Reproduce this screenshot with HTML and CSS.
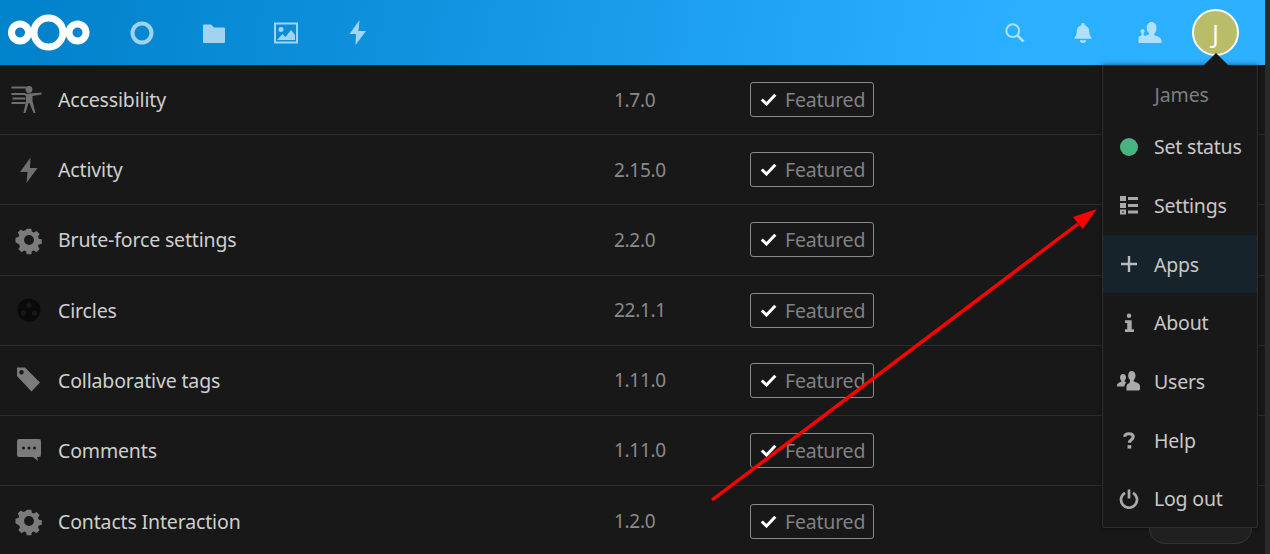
FILE: index.html
```html
<!DOCTYPE html>
<html lang="en">
<head>
<meta charset="utf-8">
<title>Apps</title>
<link rel="stylesheet" href="styles.css">
</head>
<body>
<div class="page">
  <header class="topbar">
    <nav class="nav-left">
      <svg class="logo" width="82" height="38" viewBox="0 0 82 38"><g fill="none" stroke="#fff" stroke-width="7"><circle cx="40.500" cy="18.500" r="14.500"/><circle cx="12" cy="18.500" r="8.500"/><circle cx="69.500" cy="18.500" r="8.500"/></g></svg>
      <div class="nav-apps">
        <svg class="nav-icon" width="24" height="24" viewBox="0 0 24 24"><circle cx="12" cy="12" r="9.500" fill="none" stroke="#fff" stroke-width="4"/></svg>
        <svg class="nav-icon" width="24" height="24" viewBox="0 0 24 24"><path d="M1 4.500a1 1 0 0 1 1-1h7l3 3h10a1 1 0 0 1 1 1V21a1 1 0 0 1-1 1H2a1 1 0 0 1-1-1z" fill="#fff"/></svg>
        <svg class="nav-icon" width="24" height="24" viewBox="0 0 24 24"><path fill-rule="evenodd" d="M0 1.500h24v21H0zM2 3.500v17h20v-17zM7 6a2.500 2.500 0 1 1 0 5 2.500 2.500 0 0 1 0-5zM3 19l5.500-6 3 3 5.500-7 4 5v5z" fill="#fff"/></svg>
        <svg class="nav-icon" width="24" height="26" viewBox="0 0 24 26"><path d="M13.500 0 3.500 14h6.500L9.500 25 20 11h-7.500z" fill="#fff"/></svg>
      </div>
    </nav>
    <div class="nav-right">
      <svg class="nav-tool" width="20" height="20" viewBox="0 0 22 22"><circle cx="8.500" cy="8.500" r="7" fill="none" stroke="#fff" stroke-width="2.200"/><path d="M13.500 13.500 20.500 20.500" stroke="#fff" stroke-width="2.800"/></svg>
      <svg class="nav-tool" width="18" height="20" viewBox="0 0 20 22"><path d="M10 0a2 2 0 0 1 2 2.300c3.500 1 5 4 5 7.200 0 3 1 5 2.500 6.500v1.500H.5V16C2 14.500 3 12.500 3 9.500c0-3.200 1.500-6.200 5-7.200A2 2 0 0 1 10 0zM6.500 19h7a3.500 3 0 0 1-7 0z" fill="#fff"/></svg>
      <svg class="nav-tool" width="24" height="24" viewBox="0 0 24 24"><path d="M13.500 1c3 0 5 2.500 5 6 0 2.500-1 4.500-2.200 5.700v1.500c3 1.200 7 2 7.200 5.300v2.500H6.500v-4.500c0-1 .5-2 1.500-3 1-.4 2-.8 3-1.300v-1C9.500 11 8.700 9 8.700 7c0-3.500 2-6 4.800-6z" fill="#fff"/><path d="M4.500 8a2.200 2.200 0 0 1 1.200 4v2.500h1.800v7.500H1.500c-.8 0-1-.5-1-1v-4c0-1.500 1.500-2.500 3-2.500V12a2.200 2.200 0 0 1 1-4z" fill="#fff"/></svg>
      <div class="avatar">J</div>
    </div>
  </header>
  <main class="rows">
    <div class="row">
      <svg class="row-icon" width="30" height="30" viewBox="0 0 30 30"><g fill="#6f6f6f" transform="translate(-2.500 0)"><circle cx="17.500" cy="4.500" r="3.400"/><path d="M0 8h14l0 2H0zM12 9l18-1.500v2L21 11v5l3 12h-2l-4-10h-1l-3 10h-2l2.500-12v-5z"/><path d="M0 1.500h15v2H0zM1 12.500h13v2H1zM0 17h14v2H0z"/></g></svg>
      <span class="name">Accessibility</span><span class="version">1.7.0</span><span class="badge"><svg class="check" width="17" height="13" viewBox="0 0 16 13"><path d="M1.300 6.500 6 11 14.800 1.800" fill="none" stroke="#fff" stroke-width="3"/></svg>Featured</span>
    </div>
    <div class="row">
      <svg class="row-icon" width="30" height="30" viewBox="0 0 30 30"><path d="M16.500 2.500 6 17h7.500L12.500 28 23.500 13h-7.500z" fill="#6f6f6f"/></svg>
      <span class="name">Activity</span><span class="version">2.15.0</span><span class="badge"><svg class="check" width="17" height="13" viewBox="0 0 16 13"><path d="M1.300 6.500 6 11 14.800 1.800" fill="none" stroke="#fff" stroke-width="3"/></svg>Featured</span>
    </div>
    <div class="row">
      <svg class="row-icon" width="30" height="30" viewBox="0 0 30 30"><use href="#gear"/></svg>
      <span class="name">Brute-force settings</span><span class="version">2.2.0</span><span class="badge"><svg class="check" width="17" height="13" viewBox="0 0 16 13"><path d="M1.300 6.500 6 11 14.800 1.800" fill="none" stroke="#fff" stroke-width="3"/></svg>Featured</span>
    </div>
    <div class="row">
      <svg class="row-icon" width="30" height="30" viewBox="0 0 30 30"><path fill-rule="evenodd" d="M15 3.500a11.500 11.500 0 1 1 0 23 11.500 11.500 0 0 1 0-23zM15 7.500a2.600 2.600 0 1 0 0 5.200 2.600 2.600 0 0 0 0-5.200zM9.500 15.500a2.600 2.600 0 1 0 0 5.200 2.600 2.600 0 0 0 0-5.200zM20.500 15.500a2.600 2.600 0 1 0 0 5.200 2.600 2.600 0 0 0 0-5.200z" fill="#0a0a0a"/></svg>
      <span class="name">Circles</span><span class="version">22.1.1</span><span class="badge"><svg class="check" width="17" height="13" viewBox="0 0 16 13"><path d="M1.300 6.500 6 11 14.800 1.800" fill="none" stroke="#fff" stroke-width="3"/></svg>Featured</span>
    </div>
    <div class="row">
      <svg class="row-icon" width="30" height="30" viewBox="0 0 30 30"><path fill-rule="evenodd" d="M3 2.500h8l15 15-8.500 9L3 11zM7.500 5a2.200 2.200 0 1 0 0 4.400 2.200 2.200 0 0 0 0-4.400z" fill="#7b7b7b"/></svg>
      <span class="name">Collaborative tags</span><span class="version">1.11.0</span><span class="badge"><svg class="check" width="17" height="13" viewBox="0 0 16 13"><path d="M1.300 6.500 6 11 14.800 1.800" fill="none" stroke="#fff" stroke-width="3"/></svg>Featured</span>
    </div>
    <div class="row">
      <svg class="row-icon" width="30" height="30" viewBox="0 0 30 30"><path fill-rule="evenodd" d="M5 4h20a2 2 0 0 1 2 2v14a2 2 0 0 1-2 2h-2l1 4-5-4H5a2 2 0 0 1-2-2V6a2 2 0 0 1 2-2zM9.500 11.500a1.500 1.500 0 1 0 0 3 1.500 1.500 0 0 0 0-3zM15 11.500a1.500 1.500 0 1 0 0 3 1.500 1.500 0 0 0 0-3zM20.500 11.500a1.500 1.500 0 1 0 0 3 1.500 1.500 0 0 0 0-3z" fill="#7b7b7b"/></svg>
      <span class="name">Comments</span><span class="version">1.11.0</span><span class="badge"><svg class="check" width="17" height="13" viewBox="0 0 16 13"><path d="M1.300 6.500 6 11 14.800 1.800" fill="none" stroke="#fff" stroke-width="3"/></svg>Featured</span>
    </div>
    <div class="row">
      <svg class="row-icon" width="30" height="30" viewBox="0 0 30 30"><use href="#gear"/></svg>
      <span class="name">Contacts Interaction</span><span class="version">1.2.0</span><span class="badge"><svg class="check" width="17" height="13" viewBox="0 0 16 13"><path d="M1.300 6.500 6 11 14.800 1.800" fill="none" stroke="#fff" stroke-width="3"/></svg>Featured</span>
    </div>
  </main>
  <div class="scrollbar"></div>
  <aside class="menu">
    <div class="caret"></div>
    <div class="menu-name">James</div>
    <div class="item"><span class="item-icon"><span class="status-dot"></span></span>Set status</div>
    <div class="item"><span class="item-icon"><svg width="20" height="20" viewBox="0 0 20 20"><g fill="#aaa"><path d="M1 1h6v5H1zM9 2h10v3H9zM1 8h6v5H1zM9 9h10v3H9zM9 15.500h10v3H9z"/><path fill-rule="evenodd" d="M1 14.500h6v5H1zM3 16.500v1h2v-1z"/></g></svg></span>Settings</div>
    <div class="item active"><span class="item-icon"><svg width="20" height="20" viewBox="0 0 20 20"><path d="M10 2v16M2 10h16" stroke="#bbb" stroke-width="2.400"/></svg></span>Apps</div>
    <div class="item"><span class="item-icon"><svg width="18" height="20" viewBox="0 0 20 22"><g fill="#aaa"><circle cx="10" cy="3" r="2.500"/><path d="M5.500 8h7.500v10h2.500v3h-10v-3H8v-7H5.500z"/></g></svg></span>About</div>
    <div class="item"><span class="item-icon"><svg width="24" height="20" viewBox="0 0 24 20"><g fill="#aaa"><path d="M14.500 0c2.500 0 4 2 4 4.500 0 2-.8 3.500-1.800 4.500v1.500c2.500 1 6 1.500 6.300 4.500v2.700c0 1-.5 1.800-2 1.800H9.500V15.500c0-1.500 1-2.500 2.700-3.200l.8-1.800V9c-1-1-1.800-2.500-1.800-4.500C11.200 2 12.500 0 14.500 0z"/><path d="M6 3c1.800 0 3 1.500 3 3.300 0 1.500-.7 2.700-1.300 3.300v1.200l1.700.7c-1.200 1-2 2.500-2 4H0v-1.500c0-1.700 2.500-2.500 4.300-3.300v-1C3.500 9 3 7.800 3 6.300 3 4.500 4.200 3 6 3z"/></g></svg></span>Users</div>
    <div class="item"><span class="item-icon"><svg width="12" height="17" viewBox="0 0 14 20"><path d="M2 5.500C2 3.300 4 2 7 2s5 1.400 5 3.700c0 3.500-4.500 3.300-4.500 7" fill="none" stroke="#aaa" stroke-width="3.600"/><rect x="5.300" y="15.500" width="4.400" height="4" fill="#aaa"/></svg></span>Help</div>
    <div class="item"><span class="item-icon"><svg width="20" height="20" viewBox="0 0 20 20"><path d="M6 3.800a8 8 0 1 0 8 0M10 .5v9" fill="none" stroke="#aaa" stroke-width="2.700"/></svg></span>Log out</div>
  </aside>
  <div class="peek"></div>
  <svg class="arrow" width="400" height="320" viewBox="0 0 400 320"><path d="M2 306 368 30" stroke="#f00" stroke-width="3.400"/><path d="M386.700 15 363 23 372.700 35z" fill="#f00"/></svg>
  <svg class="defs" width="0" height="0"><defs><path id="gear" fill-rule="evenodd" d="M12.500 2.500h5l.7 3.300 2.200.9 2.900-1.800 3.500 3.500-1.800 2.900.9 2.200 3.300.7v5l-3.300.7-.9 2.200 1.800 2.900-3.500 3.500-2.900-1.800-2.200.9-.7 3.300h-5l-.7-3.300-2.200-.9-2.900 1.800-3.500-3.500 1.800-2.900-.9-2.200L0 17.500v-5l3.300-.7.9-2.200L2.400 6.700l3.500-3.500 2.900 1.800 2.200-.9zM15 9.500a5.500 5.500 0 1 0 0 11 5.500 5.500 0 0 0 0-11z" fill="#7b7b7b" transform="translate(1.500 1.500) scale(.9)"/></defs></svg>
</div>
</body>
</html>
```
FILE: styles.css
```css
* { box-sizing: border-box; }
html, body { margin: 0; padding: 0; height: 100%; overflow: hidden; background: #181818; }
body { font-family: "Noto Sans", "Open Sans", sans-serif; }
.page { position: relative; width: 1270px; height: 554px; overflow: hidden; background: #181818; }
.topbar {
  width: 1265px; height: 65px;
  display: flex; align-items: center; justify-content: space-between;
  background: linear-gradient(100deg, #0082c9 0%, #0f90dd 30%, #2aaeff 78%, #2cb0ff 100%);
}
.nav-left { display: flex; align-items: center; padding-left: 8px; }
.logo { flex: none; }
.nav-apps { display: flex; align-items: center; gap: 48px; margin-left: 40px; }
.nav-icon { opacity: .62; flex: none; }
.nav-right { display: flex; align-items: center; }
.nav-tool { opacity: .62; flex: none; }
.nav-tool:nth-child(1) { margin-right: 49px; }
.nav-tool:nth-child(2) { margin-right: 46px; }
.nav-tool:nth-child(3) { margin-right: 30px; }
.avatar {
  width: 47px; height: 47px; margin-right: 26px; border-radius: 50%;
  background: #b9bd6a; border: 2px solid #fff; color: #fff;
  display: flex; align-items: center; justify-content: center;
  font-family: "Open Sans", sans-serif; font-size: 26px; font-weight: 400;
}
.rows { width: 1265px; }
.row {
  height: 70.18px; display: flex; align-items: center;
  border-bottom: 1px solid #2d2d2d; padding-left: 14px;
  font-size: 19.5px; color: #cfcfcf;
}
.row:last-child { border-bottom: none; }
.row-icon { flex: none; width: 30px; height: 30px; overflow: visible; }
.name { width: 557px; margin-left: 14px; flex: none; letter-spacing: -.15px; }
.version { width: 135px; flex: none; margin-left: -1px; margin-right: 1px; color: #8a8a8a; font-size: 19px; letter-spacing: -.3px; }
.badge {
  display: flex; align-items: center; width: 124px; height: 35px; flex: none;
  border: 1px solid #8a8a8a; border-radius: 3px; padding-left: 9px;
  color: #828282; letter-spacing: -.2px;
}
.check { flex: none; margin-right: 8px; }
.scrollbar { position: absolute; top: 0; right: 0; width: 5px; height: 554px; background: #2a2a2a; }
.menu {
  position: absolute; top: 65px; left: 1102px; width: 156px; height: 463px;
  background: #181818; border: 1px solid #2f2f2f; border-top-color: #2a2a2a;
  border-radius: 0 0 3px 3px; color: #c8c8c8; font-size: 19.5px;
  box-shadow: 0 0 5px rgba(0, 0, 0, .5);
}
.caret {
  position: absolute; top: -13px; left: 100px; width: 0; height: 0;
  border-left: 13px solid transparent; border-right: 13px solid transparent;
  border-bottom: 13px solid #181818;
}
.menu-name { height: 51.5px; padding: 15px 0 0 51.5px; color: #7e7e7e; letter-spacing: -.1px; }
.item { height: 58.67px; display: flex; align-items: center; letter-spacing: -.2px; }
.item.active { background: #17232b; }
.item-icon { width: 51px; flex: none; display: flex; justify-content: center; }
.status-dot { width: 18px; height: 18px; border-radius: 50%; background: #49b382; }
.peek {
  position: absolute; left: 1149px; top: 528px; width: 103px; height: 16px;
  background: #202020; border: 1px solid #333; border-top: none; border-radius: 0 0 24px 24px;
}
.arrow { position: absolute; left: 710px; top: 194px; }
.defs { position: absolute; }
```
